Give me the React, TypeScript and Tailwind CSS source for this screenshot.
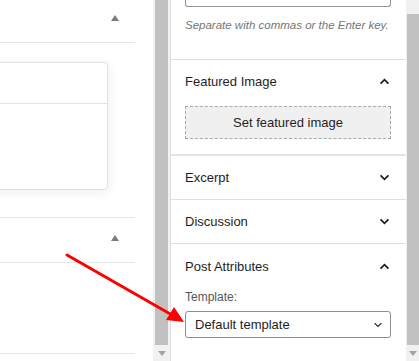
import React from "react";

const Chevron = ({ up = false, small = false }: { up?: boolean; small?: boolean }) => (
  <svg
    width={small ? 10 : 11}
    height={small ? 6 : 7}
    viewBox="0 0 12 8"
    fill="none"
    stroke="#1e1e1e"
    strokeWidth={small ? 1.5 : 2}
  >
    <path d={up ? "M1.5 6.5 L6 2 L10.5 6.5" : "M1.5 1.5 L6 6 L10.5 1.5"} />
  </svg>
);

const Triangle = () => (
  <svg width="8" height="6" viewBox="0 0 8 6">
    <path d="M4 0 L8 6 L0 6 Z" fill="#787c82" />
  </svg>
);

const PanelHeader = ({ title, open = false }: { title: string; open?: boolean }) => (
  <div className="flex h-[43px] items-center justify-between pl-[14px] pr-[16px]">
    <span className="text-[13px] text-[#1e1e1e]">{title}</span>
    <span className="flex">
      <Chevron up={open} />
    </span>
  </div>
);

const Divider = () => <div className="h-px bg-[#e0e0e0]" />;

export default function App() {
  return (
    <div
      className="relative flex h-[361px] w-[419px] overflow-hidden bg-white"
      style={{ fontFamily: '"Liberation Sans", Arial, sans-serif' }}
    >
      {/* main editor (left) */}
      <div className="flex w-[153px] flex-col pr-[18px]">
        <div className="flex h-[42px] justify-end pr-[16px] pt-[15px]">
          <Triangle />
        </div>
        <div className="h-px bg-[#e6e6e6]" />
        <div className="h-[19px]" />
        <div className="ml-[-12px] flex h-[128px] w-[120px] flex-col rounded-[4px] border border-[#e2e2e2] bg-white shadow-[0_2px_12px_rgba(0,0,0,0.08)]">
          <div className="h-[40px]" />
          <div className="h-px bg-[#e2e2e2]" />
        </div>
        <div className="h-[27px]" />
        <div className="h-px bg-[#e6e6e6]" />
        <div className="flex h-[44px] justify-end pr-[16px] pt-[17px]">
          <Triangle />
        </div>
        <div className="h-px bg-[#e6e6e6]" />
        <div className="h-[90px]" />
        <div className="h-px bg-[#e6e6e6]" />
      </div>

      {/* left scrollbar */}
      <div className="flex w-[17px] flex-col bg-[#f1f1f1]">
        <div className="mx-[2px] h-[345px] bg-[#c1c1c1]" />
        <div className="flex flex-1 items-center justify-center">
          <svg width="8" height="5" viewBox="0 0 8 5">
            <path d="M0 0 L8 0 L4 5 Z" fill="#a3a3a3" />
          </svg>
        </div>
      </div>

      {/* settings sidebar */}
      <div className="flex w-[236px] flex-col border-l border-[#e0e0e0]">
        <div className="pl-[14px] pr-[15px]">
          <div className="h-[7px] rounded-b-[3px] border-x border-b border-[#949494]" />
          <p className="mt-[10px] whitespace-nowrap text-[11.5px] italic leading-[16px] text-[#757575]">
            Separate with commas or the Enter key.
          </p>
        </div>
        <div className="h-[26px]" />
        <Divider />
        <div>
          <PanelHeader title="Featured Image" open />
          <div className="pl-[14px] pr-[15px] pb-[15px] pt-[3px]">
            <div className="flex h-[33px] items-center justify-center border border-dashed border-[#a7aaad] bg-[#f0f0f1] text-[13px] text-[#1e1e1e]">
              Set featured image
            </div>
          </div>
        </div>
        <div className="h-[2px] bg-[#e4e4e4]" />
        <PanelHeader title="Excerpt" />
        <Divider />
        <PanelHeader title="Discussion" />
        <Divider />
        <div>
          <div className="flex h-[45px] items-center justify-between pl-[14px] pr-[16px]">
            <span className="text-[13px] text-[#1e1e1e]">Post Attributes</span>
            <span className="flex">
              <Chevron up />
            </span>
          </div>
          <div className="pl-[14px] pr-[15px]">
            <div className="text-[12px] leading-[16px] text-[#50575e]">Template:</div>
            <div className="mt-[6px] flex h-[27px] items-center justify-between rounded-[3px] border border-[#8c8f94] pl-[9px] pr-[7px]">
              <span className="text-[13px] text-[#1e1e1e]">Default template</span>
              <Chevron small />
            </div>
          </div>
        </div>
      </div>

      {/* right scrollbar */}
      <div className="flex w-[13px] flex-col bg-[#f1f1f1]">
        <div className="h-[14px]" />
        <div className="ml-[1px] h-[331px] bg-[#c1c1c1]" />
        <div className="flex flex-1 items-center justify-center pl-[1px]">
          <svg width="8" height="5" viewBox="0 0 8 5">
            <path d="M0 0 L8 0 L4 5 Z" fill="#a3a3a3" />
          </svg>
        </div>
      </div>

      {/* red annotation arrow */}
      <svg className="pointer-events-none absolute left-0 top-0" width="419" height="361">
        <line x1="67" y1="255" x2="172" y2="315" stroke="#ff0000" strokeWidth="3" strokeLinecap="round" />
        <path d="M184 322 L166 320 L174 307 Z" fill="#ff0000" />
      </svg>
    </div>
  );
}
